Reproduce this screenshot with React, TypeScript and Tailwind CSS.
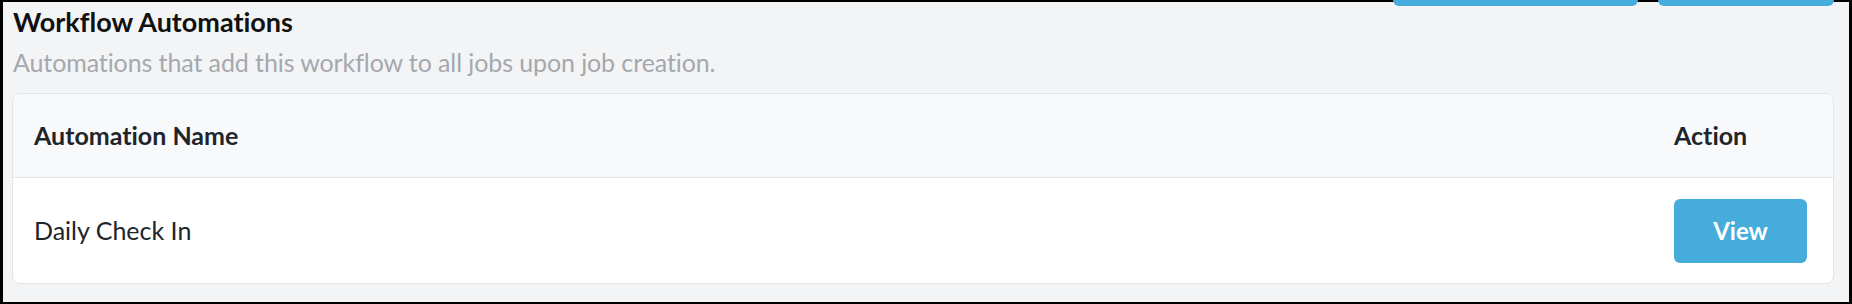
const rows = [{ name: "Daily Check In" }];

export default function App() {
  return (
    <div className="h-[304px] w-[1852px] bg-black pt-[2px] pb-[2px] pl-[3px] pr-[3px] [font-variant-ligatures:none]" style={{ fontFamily: "Lato, 'Noto Sans', sans-serif" }}>
      <div className="flex h-full flex-col bg-[#f3f4f6] pl-[9px] pr-[15px]">
        <div className="flex items-start justify-between">
          <h1 className="pl-[1px] pt-[4px] text-[27px] font-bold leading-[32px] text-[#111]">Workflow Automations</h1>
          <div className="flex gap-5">
            <div className="-mt-10 h-[44px] w-[245px] rounded-md bg-[#45acdb]" />
            <div className="-mt-10 h-[44px] w-[176px] rounded-md bg-[#45acdb]" />
          </div>
        </div>
        <p className="pl-[1px] pt-[9px] text-[25px] leading-[30px] tracking-[-0.1px] text-[#a5a8ad]">
          Automations that add this workflow to all jobs upon job creation.
        </p>
        <div className="mt-[16px] overflow-hidden rounded-lg border border-[#e3e5e8] bg-white">
          <div className="flex h-[84px] items-center border-b border-[#e3e5e8] bg-[#f8f9fa] pl-[21px] pr-[26px] pt-[1px] text-[25px] font-bold text-[#212529]">
            <div className="flex-1">Automation Name</div>
            <div className="w-[133px]">Action</div>
          </div>
          {rows.map((r) => (
            <div key={r.name} className="flex h-[105px] items-center pl-[21px] pr-[26px] text-[25px] text-[#212529]">
              <div className="flex-1">{r.name}</div>
              <button className="h-[64px] w-[133px] rounded-md bg-[#45acdb] text-[24px] font-bold text-white">View</button>
            </div>
          ))}
        </div>
      </div>
    </div>
  );
}
